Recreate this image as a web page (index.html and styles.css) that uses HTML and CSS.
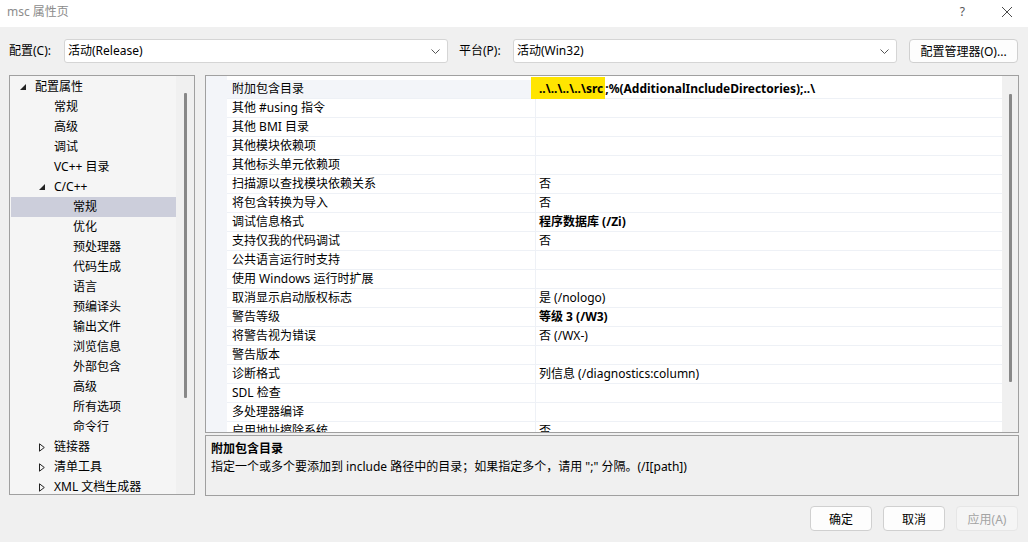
FILE: index.html
```html
<!DOCTYPE html>
<html lang="zh-CN">
    <head>
        <meta charset="UTF-8" />
        <title>msc 属性页</title>
        <link rel="stylesheet" href="styles.css">
    </head>
    <body>
        <div class="dialog">
            <!-- Title bar -->
            <div class="titlebar">
                <span class="title">msc 属性页</span>
                <div class="title-actions">
                    <span class="help">?</span>
                    <svg class="close" width="12" height="12" viewBox="0 0 12 12">
                        <path d="M1 1 11 11M11 1 1 11" stroke="#4a4a4a" stroke-width="1" fill="none" />
                    </svg>
                </div>
            </div>

            <!-- Configuration / platform -->
            <div class="toolbar">
                <label class="tb-label">配置(C):</label>
                <div class="combo combo-config">
                    <span>活动(Release)</span>
                    <svg width="9" height="5" viewBox="0 0 9 5"><path d="M0.5 0.5 4.5 4.5 8.5 0.5" stroke="#555" fill="none" /></svg>
                </div>
                <label class="tb-label tb-platform">平台(P):</label>
                <div class="combo combo-platform">
                    <span>活动(Win32)</span>
                    <svg width="9" height="5" viewBox="0 0 9 5"><path d="M0.5 0.5 4.5 4.5 8.5 0.5" stroke="#555" fill="none" /></svg>
                </div>
                <button class="btn btn-manager">配置管理器(O)...</button>
            </div>

            <div class="main">
                <!-- Tree -->
                <div class="tree">
                    <div class="tree-items">
                        <div class="node lv0"><span class="tw"><svg width="6" height="6" viewBox="0 0 6 6"><path d="M6 0 6 6 0 6Z" fill="#222" /></svg></span>配置属性</div>
                        <div class="node lv1"><span class="tw"></span>常规</div>
                        <div class="node lv1"><span class="tw"></span>高级</div>
                        <div class="node lv1"><span class="tw"></span>调试</div>
                        <div class="node lv1"><span class="tw"></span>VC++ 目录</div>
                        <div class="node lv1"><span class="tw"><svg width="6" height="6" viewBox="0 0 6 6"><path d="M6 0 6 6 0 6Z" fill="#222" /></svg></span>C/C++</div>
                        <div class="node lv2 selected"><span class="tw"></span>常规</div>
                        <div class="node lv2"><span class="tw"></span>优化</div>
                        <div class="node lv2"><span class="tw"></span>预处理器</div>
                        <div class="node lv2"><span class="tw"></span>代码生成</div>
                        <div class="node lv2"><span class="tw"></span>语言</div>
                        <div class="node lv2"><span class="tw"></span>预编译头</div>
                        <div class="node lv2"><span class="tw"></span>输出文件</div>
                        <div class="node lv2"><span class="tw"></span>浏览信息</div>
                        <div class="node lv2"><span class="tw"></span>外部包含</div>
                        <div class="node lv2"><span class="tw"></span>高级</div>
                        <div class="node lv2"><span class="tw"></span>所有选项</div>
                        <div class="node lv2"><span class="tw"></span>命令行</div>
                        <div class="node lv1"><span class="tw"><svg width="6" height="9" viewBox="0 0 6 9"><path d="M0.5 0.8 5.3 4.5 0.5 8.2Z" stroke="#222" fill="none" /></svg></span>链接器</div>
                        <div class="node lv1"><span class="tw"><svg width="6" height="9" viewBox="0 0 6 9"><path d="M0.5 0.8 5.3 4.5 0.5 8.2Z" stroke="#222" fill="none" /></svg></span>清单工具</div>
                        <div class="node lv1"><span class="tw"><svg width="6" height="9" viewBox="0 0 6 9"><path d="M0.5 0.8 5.3 4.5 0.5 8.2Z" stroke="#222" fill="none" /></svg></span>XML 文档生成器</div>
                    </div>
                    <div class="tree-scroll"><div class="thumb"></div></div>
                </div>

                <div class="right">
                    <!-- Property grid -->
                    <div class="grid">
                        <div class="rows">
                            <div class="row active">
                                <div class="gutter"></div>
                                <div class="name">附加包含目录</div>
                                <div class="value bold"><span class="mark">..\..\..\..\src</span>;%(AdditionalIncludeDirectories);..\</div>
                            </div>
                            <div class="row"><div class="gutter"></div><div class="name">其他 #using 指令</div><div class="value"></div></div>
                            <div class="row"><div class="gutter"></div><div class="name">其他 BMI 目录</div><div class="value"></div></div>
                            <div class="row"><div class="gutter"></div><div class="name">其他模块依赖项</div><div class="value"></div></div>
                            <div class="row"><div class="gutter"></div><div class="name">其他标头单元依赖项</div><div class="value"></div></div>
                            <div class="row"><div class="gutter"></div><div class="name">扫描源以查找模块依赖关系</div><div class="value">否</div></div>
                            <div class="row"><div class="gutter"></div><div class="name">将包含转换为导入</div><div class="value">否</div></div>
                            <div class="row"><div class="gutter"></div><div class="name">调试信息格式</div><div class="value bold">程序数据库 (/Zi)</div></div>
                            <div class="row"><div class="gutter"></div><div class="name">支持仅我的代码调试</div><div class="value">否</div></div>
                            <div class="row"><div class="gutter"></div><div class="name">公共语言运行时支持</div><div class="value"></div></div>
                            <div class="row"><div class="gutter"></div><div class="name">使用 Windows 运行时扩展</div><div class="value"></div></div>
                            <div class="row"><div class="gutter"></div><div class="name">取消显示启动版权标志</div><div class="value">是 (/nologo)</div></div>
                            <div class="row"><div class="gutter"></div><div class="name">警告等级</div><div class="value bold">等级 3 (/W3)</div></div>
                            <div class="row"><div class="gutter"></div><div class="name">将警告视为错误</div><div class="value">否 (/WX-)</div></div>
                            <div class="row"><div class="gutter"></div><div class="name">警告版本</div><div class="value"></div></div>
                            <div class="row"><div class="gutter"></div><div class="name">诊断格式</div><div class="value">列信息 (/diagnostics:column)</div></div>
                            <div class="row"><div class="gutter"></div><div class="name">SDL 检查</div><div class="value"></div></div>
                            <div class="row"><div class="gutter"></div><div class="name">多处理器编译</div><div class="value"></div></div>
                            <div class="row"><div class="gutter"></div><div class="name">启用地址擦除系统</div><div class="value">否</div></div>
                        </div>
                        <div class="grid-scroll"><div class="thumb"></div></div>
                    </div>

                    <!-- Description -->
                    <div class="desc">
                        <div class="desc-title">附加包含目录</div>
                        <div class="desc-text">指定一个或多个要添加到 include 路径中的目录；如果指定多个，请用 ";" 分隔。(/I[path])</div>
                    </div>
                </div>
            </div>

            <div class="footer">
                <button class="btn">确定</button>
                <button class="btn">取消</button>
                <button class="btn disabled">应用(A)</button>
            </div>
        </div>
    </body>
</html>
```

FILE: styles.css
```css
* {
    margin: 0;
    padding: 0;
    box-sizing: border-box;
    font-family: "Noto Sans", "Noto Sans CJK SC", sans-serif;
}

body {
    width: 1028px;
    height: 542px;
    overflow: hidden;
    background-color: #f0f0f0;
    font-size: 12px;
    color: #000;
}

/* Title bar */
.titlebar {
    height: 27px;
    background-color: #fff;
    display: flex;
    align-items: center;
    justify-content: space-between;
    padding-left: 7px;
    padding-right: 15px;
}

.title {
    color: #8c8c8c;
    font-size: 12px;
    line-height: 16px;
    margin-top: -4px;
}

.title-actions {
    display: flex;
    align-items: center;
    gap: 36px;
    margin-top: -4px;
}

.help {
    color: #555;
    font-size: 12px;
    line-height: 14px;
}

/* Toolbar */
.toolbar {
    display: flex;
    align-items: center;
    padding: 12px 10px 0 9px;
    height: 36px;
}

.tb-label {
    width: 55px;
    line-height: 24px;
}

.tb-platform {
    margin-left: 11px;
    width: 54px;
}

.combo {
    width: 384px;
    height: 24px;
    background-color: #fff;
    border: 1px solid #d5d5d5;
    border-radius: 3px;
    display: flex;
    align-items: center;
    justify-content: space-between;
    padding: 0 7px 0 3px;
    line-height: 20px;
}

.btn {
    width: 62px;
    height: 25px;
    background-color: #fdfdfd;
    border: 1px solid #d0d0d0;
    border-radius: 4px;
    font-size: 12px;
    color: #000;
}

.btn-manager {
    width: 109px;
    height: 24px;
    margin-left: 12px;
}

.btn.disabled {
    background-color: #f5f5f5;
    border-color: #e6e6e6;
    color: #a3a3a3;
}

/* Main area */
.main {
    display: flex;
    gap: 10px;
    padding: 0 9px;
    margin-top: 12px;
}

.tree {
    width: 186px;
    height: 420px;
    border: 1px solid #a0a0a0;
    background-color: #f5f5f5;
    display: flex;
}

.tree-items {
    flex: 1;
    padding-top: 1px;
}

.node {
    height: 20px;
    line-height: 20px;
    display: flex;
    align-items: center;
    white-space: nowrap;
}

.node.lv0 { padding-left: 10px; }
.node.lv1 { padding-left: 29px; }
.node.lv2 { padding-left: 48px; }

.node.selected {
    background-color: #cccedb;
    margin-left: 1px;
    padding-left: 47px;
}

.tw {
    width: 15px;
    display: flex;
    align-items: center;
}

.tree-scroll {
    width: 18px;
    background-color: #f0f0f0;
    padding-top: 17px;
    display: flex;
    justify-content: center;
}

.tree-scroll .thumb {
    width: 3px;
    height: 305px;
    background-color: #888;
    border-radius: 1px;
}

.right {
    width: 814px;
    display: flex;
    flex-direction: column;
    gap: 2px;
}

/* Property grid */
.grid {
    height: 358px;
    border: 1px solid #a0a0a0;
    background-color: #fff;
    display: flex;
    overflow: hidden;
}

.rows {
    flex: 1;
    padding-top: 4px;
    background: linear-gradient(to right, #f3f5f9 21px, #fff 21px);
    overflow: hidden;
}

.row {
    display: grid;
    grid-template-columns: 21px 309px 1fr;
    height: 19px;
}

.row .name,
.row .value {
    border-bottom: 1px solid #eef1f6;
    line-height: 18px;
    white-space: nowrap;
    overflow: visible;
}

.row .name {
    padding-left: 5px;
    border-right: 1px solid #eef1f6;
}

.row .value {
    padding-left: 3px;
}

.row.active .name {
    background-color: #f3f5f9;
}

.bold {
    font-weight: 700;
}

.mark {
    background-color: #ffe500;
    margin-left: -8px;
    padding: 3px 2px 2px 8px;
}

.grid-scroll {
    width: 16px;
    background-color: #f0f0f0;
    display: flex;
    justify-content: center;
    padding-top: 18px;
}

.grid-scroll .thumb {
    width: 3px;
    height: 288px;
    background-color: #888;
    border-radius: 1px;
}

/* Description */
.desc {
    height: 61px;
    border: 1px solid #a0a0a0;
    padding: 3px 5px;
}

.desc-title {
    font-weight: 700;
    line-height: 19px;
}

.desc-text {
    line-height: 18px;
}

/* Footer */
.footer {
    display: flex;
    justify-content: flex-end;
    gap: 11px;
    padding: 10px 10px 0 0;
}
```
